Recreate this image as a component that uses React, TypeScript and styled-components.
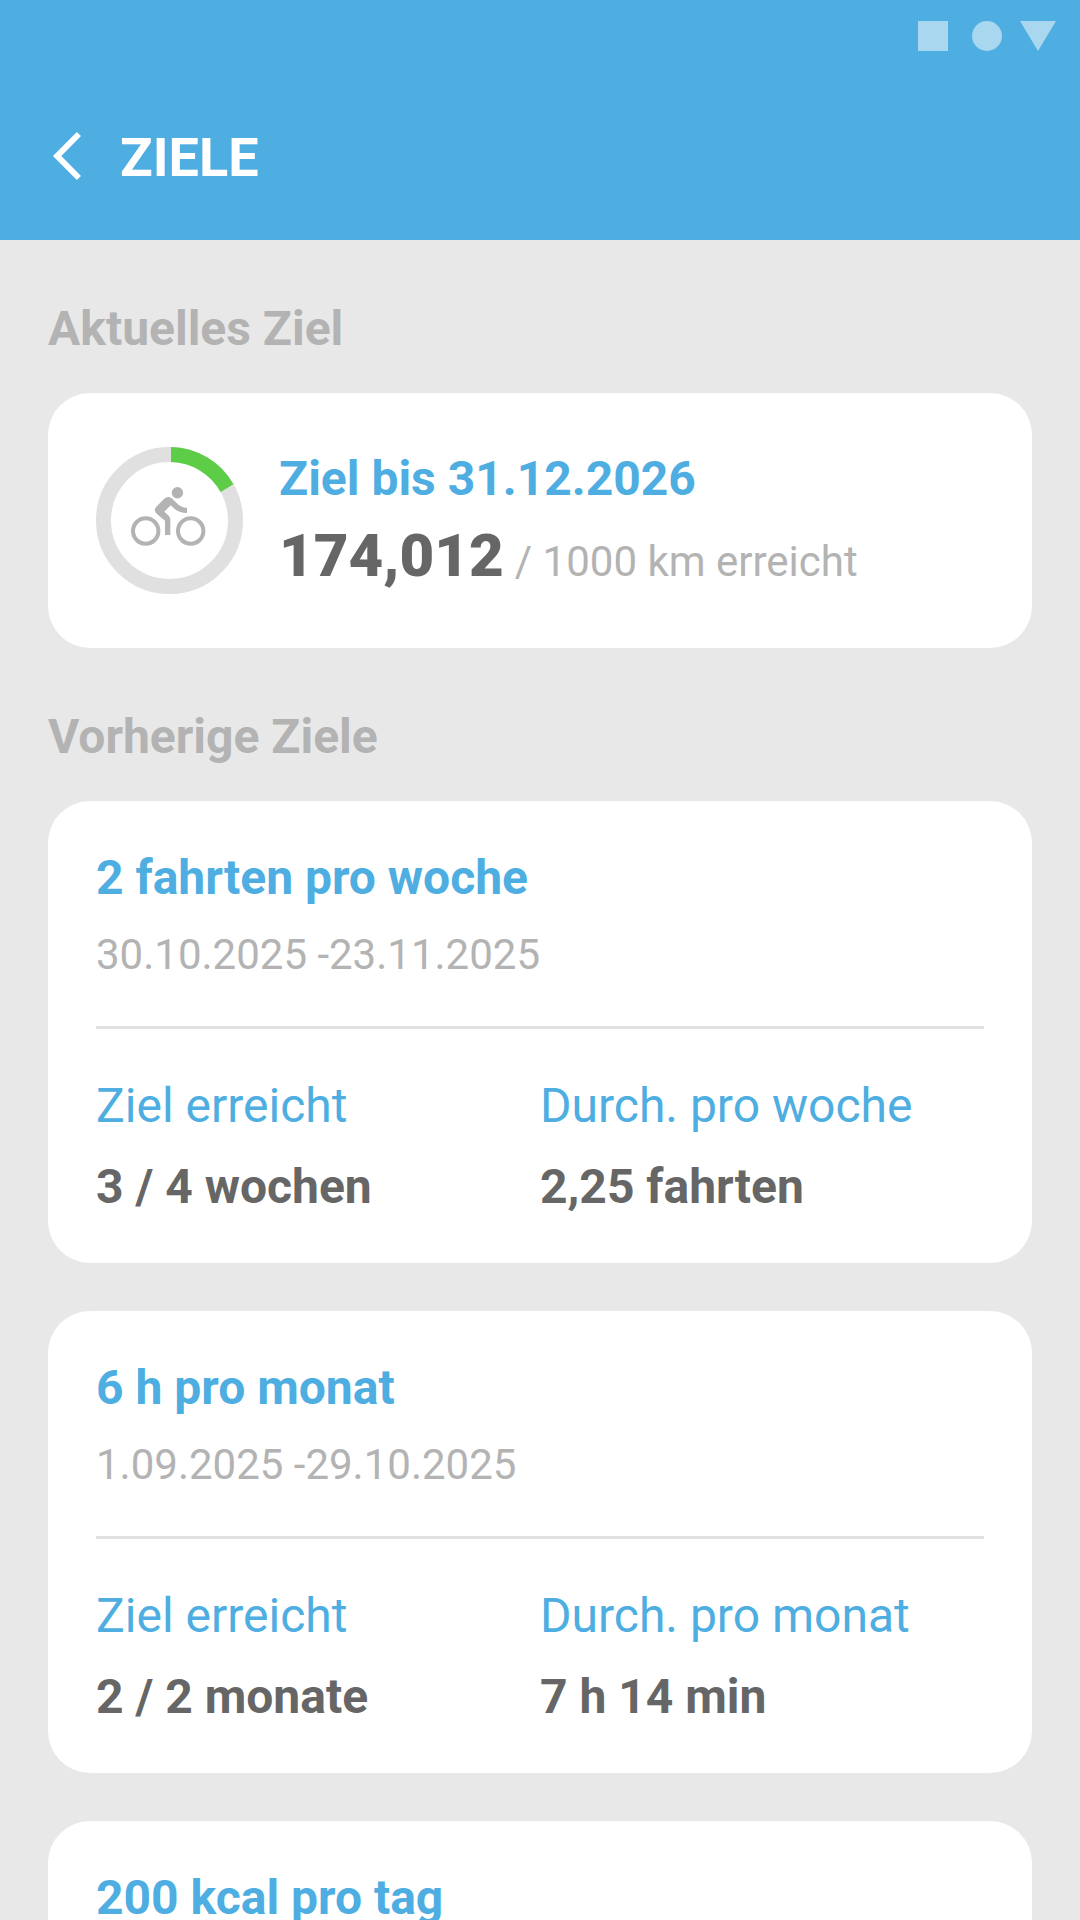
import React from "react";
import styled, { createGlobalStyle } from "styled-components";

const color = {
  brand: "#4eade1",
  status: "#a8d7ef",
  page: "#e8e8e8",
  muted: "#b3b3b3",
  strong: "#666666",
  line: "#e0e0e0",
  progress: "#5dcd48",
};

const GlobalStyle = createGlobalStyle`
  body {
    margin: 0;
    background: ${color.page};
    font-family: Roboto, "Noto Sans", sans-serif;
  }
  * { box-sizing: border-box; }
  h1, h2, h3, p { margin: 0; }
`;

const Screen = styled.div`
  width: 1080px;
  height: 1920px;
  overflow: hidden;
  display: flex;
  flex-direction: column;
  background: ${color.page};
`;

const Header = styled.header`
  flex: none;
  height: 240px;
  background: ${color.brand};
`;

const StatusBar = styled.div`
  height: 72px;
  padding: 21px 24px 21px 0;
  display: flex;
  justify-content: flex-end;
`;

const AppBar = styled.div`
  height: 168px;
  padding-left: 53px;
  display: flex;
  align-items: center;
`;

const BackButton = styled.button`
  width: 67px;
  height: 48px;
  padding: 0;
  border: 0;
  background: none;
  display: flex;
`;

const Title = styled.h1`
  padding-top: 3px;
  color: #fff;
  font-size: 54px;
  line-height: 63px;
  font-weight: 700;
`;

const Content = styled.main`
  flex: none;
  padding: 0 48px;
`;

const Section = styled.section`
  padding-top: 60px;
`;

const SectionTitle = styled.h2`
  margin-bottom: 36px;
  color: ${color.muted};
  font-size: 48px;
  line-height: 57px;
  font-weight: 700;
  white-space: nowrap;
`;

const CardList = styled.div`
  display: flex;
  flex-direction: column;
  gap: 48px;
`;

const Card = styled.article`
  padding: 48px;
  border-radius: 42px;
  background: #fff;
  white-space: nowrap;
`;

const CurrentCard = styled(Card)`
  height: 255px;
  display: flex;
  align-items: center;
  gap: 36px;
`;

const CurrentInfo = styled.div`
  display: flex;
  flex-direction: column;
  gap: 13px;
`;

const GoalTitle = styled.h3`
  color: ${color.brand};
  font-size: 48px;
  line-height: 57px;
  font-weight: 700;
`;

const Progress = styled.p`
  display: flex;
  align-items: baseline;
  gap: 11px;
`;

const Reached = styled.span`
  color: ${color.strong};
  font-size: 60px;
  line-height: 71px;
  font-weight: 900;
`;

const Target = styled.span`
  color: ${color.muted};
  font-size: 42px;
  line-height: 49px;
`;

const Period = styled.p`
  margin-top: 24px;
  color: ${color.muted};
  font-size: 42px;
  line-height: 49px;
`;

const Divider = styled.hr`
  height: 3px;
  margin: 47px 0 48px;
  border: 0;
  background: ${color.line};
`;

const Stats = styled.div`
  display: grid;
  grid-template-columns: 1fr 1fr;
`;

const Stat = styled.div`
  display: flex;
  flex-direction: column;
  gap: 24px;
  font-size: 48px;
  line-height: 57px;
`;

const StatLabel = styled.span`
  color: ${color.brand};
`;

const StatValue = styled.span`
  color: ${color.strong};
  font-weight: 700;
`;

interface Goal {
  title: string;
  period: string;
  stats: { label: string; value: string }[];
}

const goals: Goal[] = [
  {
    title: "2 fahrten pro woche",
    period: "30.10.2025 -23.11.2025",
    stats: [
      { label: "Ziel erreicht", value: "3 / 4 wochen" },
      { label: "Durch. pro woche", value: "2,25 fahrten" },
    ],
  },
  {
    title: "6 h pro monat",
    period: "1.09.2025 -29.10.2025",
    stats: [
      { label: "Ziel erreicht", value: "2 / 2 monate" },
      { label: "Durch. pro monat", value: "7 h 14 min" },
    ],
  },
  { title: "200 kcal pro tag", period: "", stats: [] },
];

const StatusIcons = () => (
  <svg width="138" height="30" viewBox="0 0 138 30" fill={color.status}>
    <rect width="30" height="30" />
    <circle cx="69" cy="15" r="15" />
    <path d="M102 0h36l-18 30z" />
  </svg>
);

const BackIcon = () => (
  <svg width="28" height="48" viewBox="0 0 28 48" fill="#fff">
    <path d="M0 24 23.8 0 28 4.1 8.3 24 28 43.9 23.8 48z" />
  </svg>
);

const ProgressRing = () => (
  <svg width="147" height="147" viewBox="0 0 147 147">
    <circle cx="73.5" cy="73.5" r="66" fill="none" stroke={color.line} strokeWidth="15" />
    <path
      d="M75 0A73.5 73.5 0 0 1 137.4 37.2L124.6 44.9A58.5 58.5 0 0 0 75 15z"
      fill={color.progress}
    />
    <g fill="none" stroke={color.muted} strokeWidth="4">
      <circle cx="49.7" cy="84" r="12.7" />
      <circle cx="94.7" cy="84" r="12.7" />
    </g>
    <circle cx="81.4" cy="45.8" r="5.7" fill={color.muted} />
    <path
      transform="translate(-16 -17) scale(.33333)"
      d="M321 249C302 249 285 241 272 226L253 245 266 257Q271 262 271 268V315H255V272L231 252Q219 241 229 230L252 207Q264 196 277 206L289 218Q303 233 321 234Z"
      fill={color.muted}
    />
  </svg>
);

const GoalCard = ({ goal }: { goal: Goal }) => (
  <Card>
    <GoalTitle>{goal.title}</GoalTitle>
    {goal.period && <Period>{goal.period}</Period>}
    {goal.stats.length > 0 && (
      <>
        <Divider />
        <Stats>
          {goal.stats.map((stat) => (
            <Stat key={stat.label}>
              <StatLabel>{stat.label}</StatLabel>
              <StatValue>{stat.value}</StatValue>
            </Stat>
          ))}
        </Stats>
      </>
    )}
  </Card>
);

export default function App() {
  return (
    <>
      <GlobalStyle />
      <Screen>
        <Header>
          <StatusBar>
            <StatusIcons />
          </StatusBar>
          <AppBar>
            <BackButton aria-label="Zurück">
              <BackIcon />
            </BackButton>
            <Title>ZIELE</Title>
          </AppBar>
        </Header>
        <Content>
          <Section>
            <SectionTitle>Aktuelles Ziel</SectionTitle>
            <CurrentCard>
              <ProgressRing />
              <CurrentInfo>
                <GoalTitle>Ziel bis 31.12.2026</GoalTitle>
                <Progress>
                  <Reached>174,012</Reached>
                  <Target>/ 1000 km erreicht</Target>
                </Progress>
              </CurrentInfo>
            </CurrentCard>
          </Section>
          <Section>
            <SectionTitle>Vorherige Ziele</SectionTitle>
            <CardList>
              {goals.map((goal) => (
                <GoalCard key={goal.title} goal={goal} />
              ))}
            </CardList>
          </Section>
        </Content>
      </Screen>
    </>
  );
}
